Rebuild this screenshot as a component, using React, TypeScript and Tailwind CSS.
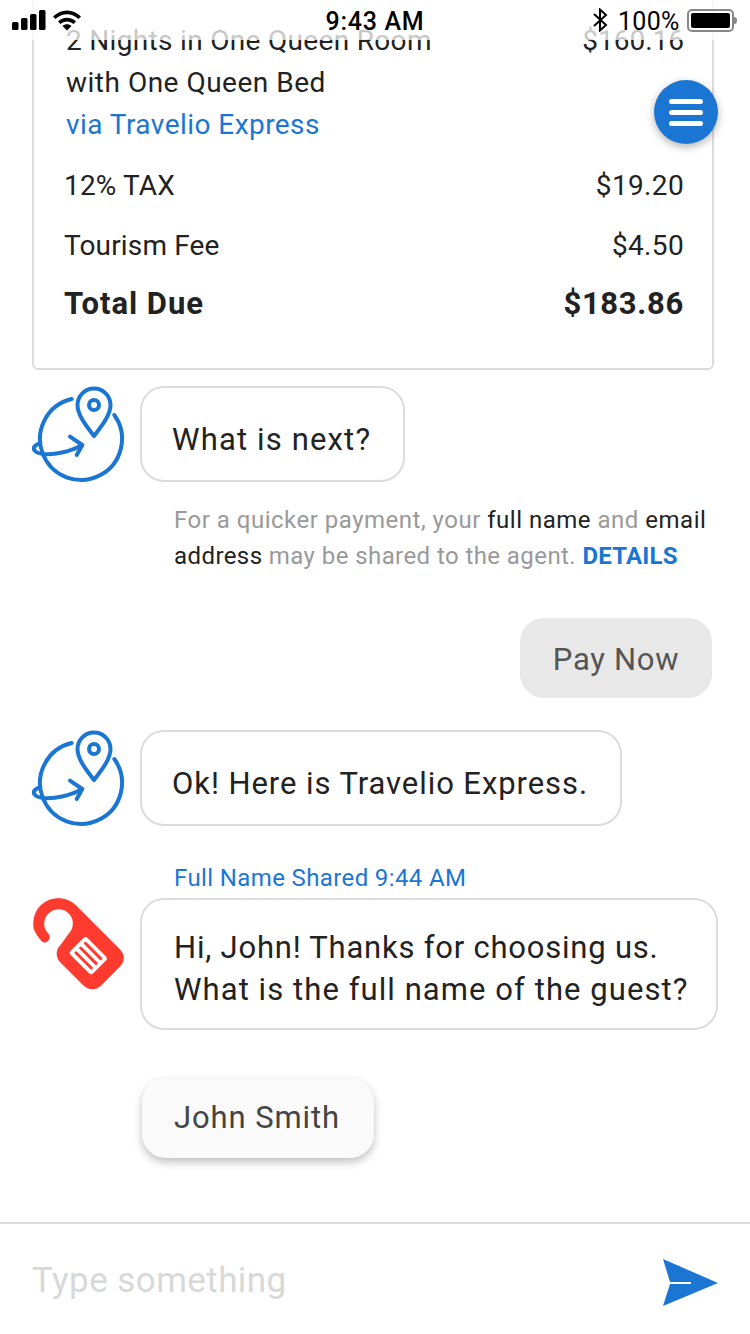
import React from "react";

const font = "font-['Roboto',sans-serif]";

const GlobeIcon = () => (
  <svg width="94" height="98" viewBox="0 0 94 98" fill="none" stroke="#1b76d3" strokeWidth="4" strokeLinecap="round" strokeLinejoin="round" className="shrink-0">
    <path d="M39.7 13 A41 41 0 1 0 82.3 29" />
    <path d="M62 50 C56 42 45.5 30 45.5 19 A16.5 16.5 0 0 1 78.5 19 C78.5 30 68 42 62 50 Z" />
    <circle cx="62" cy="19" r="5" />
    <path d="M50 59 C38 66 22 69 11 68 C3 67 0 63 3 60 C4.5 58.5 6 58 8 57" />
    <path d="M38 50.7 L50.3 59 L44.7 69" />
  </svg>
);

const TagIcon = () => (
  <svg width="92" height="92" viewBox="36 24 276 276" className="shrink-0">
    <path
      fill="#ff3b30"
      d="M62 150 C45 130 38 115 40 98 C42 55 75 25 115 25 C135 25 155 33 170 48 L298 176 C316 194 316 214 298 232 L246 284 C228 302 206 302 188 284 L122 218 C106 202 106 180 122 164 L147 130 A43 43 0 1 0 80 125 C92 135 92 150 80 156 C72 160 66 156 62 150 Z"
    />
    <g transform="translate(205 197) rotate(45)">
      <rect x="-48" y="-36" width="96" height="72" rx="10" fill="#fff" />
      <rect x="-37" y="-24.5" width="74" height="9" rx="4.5" fill="#ff3b30" />
      <rect x="-37" y="-4.5" width="74" height="9" rx="4.5" fill="#ff3b30" />
      <rect x="-37" y="15.5" width="74" height="9" rx="4.5" fill="#ff3b30" />
    </g>
  </svg>
);

const StatusBar = () => (
  <div className={`absolute top-0 left-0 w-full h-[40px] bg-white/75 ${font}`}>
    <svg width="72" height="22" viewBox="0 0 72 22" className="absolute left-[12px] top-[10px]" fill="#000">
      <rect x="0" y="12" width="6.5" height="8" rx="1.5" />
      <rect x="9" y="8" width="6.5" height="12" rx="1.5" />
      <rect x="18" y="4" width="6.5" height="16" rx="1.5" />
      <rect x="27" y="0" width="6.5" height="20" rx="1.5" />
      <path d="M41 6.5 C49 -1.5 61 -1.5 69 6.5 L66.5 9 C60 2.5 50 2.5 43.5 9 Z" />
      <path d="M46 11.5 C51 6.5 59 6.5 64 11.5 L61.5 14 C58 10.5 52 10.5 48.5 14 Z" />
      <path d="M50.5 16 C53 13.5 57 13.5 59.5 16 L55 20.5 Z" />
    </svg>
    <div className="absolute left-0 w-full top-[7px] text-center text-[25px] leading-[30px] tracking-[0.7px] font-medium text-black">9:43 AM</div>
    <svg width="16" height="24" viewBox="0 0 16 24" fill="none" stroke="#000" strokeWidth="2" className="absolute left-[592px] top-[8px]">
      <path d="M2 6 L14 17 L8 22.5 L8 1.5 L14 7 L2 18" />
    </svg>
    <div className="absolute left-[618px] top-[7px] text-[25px] leading-[30px] tracking-[0.3px] text-black">100%</div>
    <div className="absolute left-[687px] top-[9px] w-[47px] h-[23px] rounded-[5px] border-2 border-[#888] p-[2px]">
      <div className="w-full h-full bg-black rounded-[2px]" />
    </div>
    <div className="absolute left-[734px] top-[17px] w-[3px] h-[7px] bg-[#888] rounded-r-sm" />
  </div>
);

const Row = ({ left, right }: { left: string; right: string }) => (
  <div className="flex justify-between items-center text-[28px] leading-[36px] text-[#222]">
    <span className="-ml-[2px] tracking-[0.15px]">{left}</span>
    <span className="tracking-[0.35px]">{right}</span>
  </div>
);

export default function App() {
  return (
    <div className={`relative w-[750px] h-[1334px] overflow-hidden bg-white flex flex-col ${font}`}>
      <div className="h-[1222px] overflow-hidden shrink-0">
        <div className="mt-[-100px] ml-[32px] mr-[36px] h-[470px] border-2 border-[#dcdcdc] rounded-[6px] pt-[118px] pl-[32px] pr-[28px]">
          <div className="flex justify-between text-[28px] leading-[42px] text-[#222]">
            <div>
              <div className="tracking-[0.32px]">2 Nights in One Queen Room</div>
              <div className="tracking-[0.5px]">with One Queen Bed</div>
              <div className="tracking-[0.45px] text-[#1b76d3]">via Travelio Express</div>
            </div>
            <div>$160.16</div>
          </div>
          <div className="mt-[22px]">
            <Row left="12% TAX" right="$19.20" />
          </div>
          <div className="mt-[24px]">
            <Row left="Tourism Fee" right="$4.50" />
          </div>
          <div className="mt-[21px] flex justify-between items-center text-[31px] leading-[38px] font-bold text-[#222]">
            <span className="-ml-[2px] tracking-[0.95px]">Total Due</span>
            <span className="tracking-[0.7px]">$183.86</span>
          </div>
        </div>

        <div className="mt-[16px] pl-[32px] flex gap-[14px] items-start">
          <GlobeIcon />
          <div className="h-[96px] pl-[30px] pr-[32px] pt-[12px] flex items-center border-2 border-[#dcdcdc] rounded-[24px] text-[31px] tracking-[1.15px] text-[#222]">What is next?</div>
        </div>
        <div className="mt-[18px] ml-[174px] text-[24px] leading-[36px] text-[#999] whitespace-nowrap">
          <div className="tracking-[0.5px]">
            For a quicker payment, your <span className="text-[#222]">full name</span> and <span className="text-[#222]">email</span>
          </div>
          <div className="tracking-[0.42px]">
            <span className="text-[#222]">address</span> may be shared to the agent. <span className="text-[#1b76d3] font-bold tracking-[0.2px]">DETAILS</span>
          </div>
        </div>
        <div className="mt-[44px] pr-[38px] flex justify-end">
          <div className="h-[80px] w-[192px] pt-[4px] flex items-center justify-center rounded-[24px] bg-[#e8e8e8] text-[31px] tracking-[0.7px] text-[#555]">Pay Now</div>
        </div>
        <div className="mt-[32px] pl-[32px] flex gap-[14px] items-start">
          <GlobeIcon />
          <div className="h-[96px] pl-[30px] pr-[32px] pt-[12px] flex items-center border-2 border-[#dcdcdc] rounded-[24px] text-[31px] tracking-[0.93px] text-[#222]">Ok! Here is Travelio Express.</div>
        </div>
        <div className="mt-[34px] ml-[174px] text-[24px] leading-[32px] tracking-[0.38px] text-[#1b76d3]">Full Name Shared 9:44 AM</div>
        <div className="mt-[4px] pl-[32px] flex gap-[16px] items-start">
          <TagIcon />
          <div className="h-[132px] w-[578px] pl-[32px] pt-[10px] flex items-center border-2 border-[#dcdcdc] rounded-[24px] text-[31px] leading-[42px] text-[#222] whitespace-nowrap">
            <div>
              <div className="tracking-[0.78px]">Hi, John! Thanks for choosing us.</div>
              <div className="tracking-[1.07px]">What is the full name of the guest?</div>
            </div>
          </div>
        </div>
        <div className="mt-[48px] ml-[142px] w-[232px] h-[80px] pr-[2px] flex items-center justify-center rounded-[24px] bg-[#fafafa] shadow-[0_4px_8px_rgba(0,0,0,0.25)] text-[31px] tracking-[0.9px] text-[#444]">John Smith</div>
      </div>

      <div className="flex-1 border-t-2 border-[#dcdcdc] flex items-center justify-between pl-[32px] pr-[32px]">
        <span className="mt-[4px] text-[35px] tracking-[0.43px] text-[#d8d8d8]">Type something</span>
        <svg width="55" height="47" viewBox="0 0 55 47" className="mt-[6px]">
          <path fill="#1b76d3" d="M0 0 L55 24 L0 47 L7 25 L28 25 L28 23 L7 23 Z" />
        </svg>
      </div>

      <StatusBar />

      <div className="absolute left-[654px] top-[80px] w-[64px] h-[64px] rounded-full bg-[#1b76d3] shadow-[0_3px_8px_rgba(0,0,0,0.3)] flex flex-col items-center justify-center gap-[6px]">
        <div className="w-[34px] h-[5px] rounded-full bg-white" />
        <div className="w-[34px] h-[5px] rounded-full bg-white" />
        <div className="w-[34px] h-[5px] rounded-full bg-white" />
      </div>
    </div>
  );
}
